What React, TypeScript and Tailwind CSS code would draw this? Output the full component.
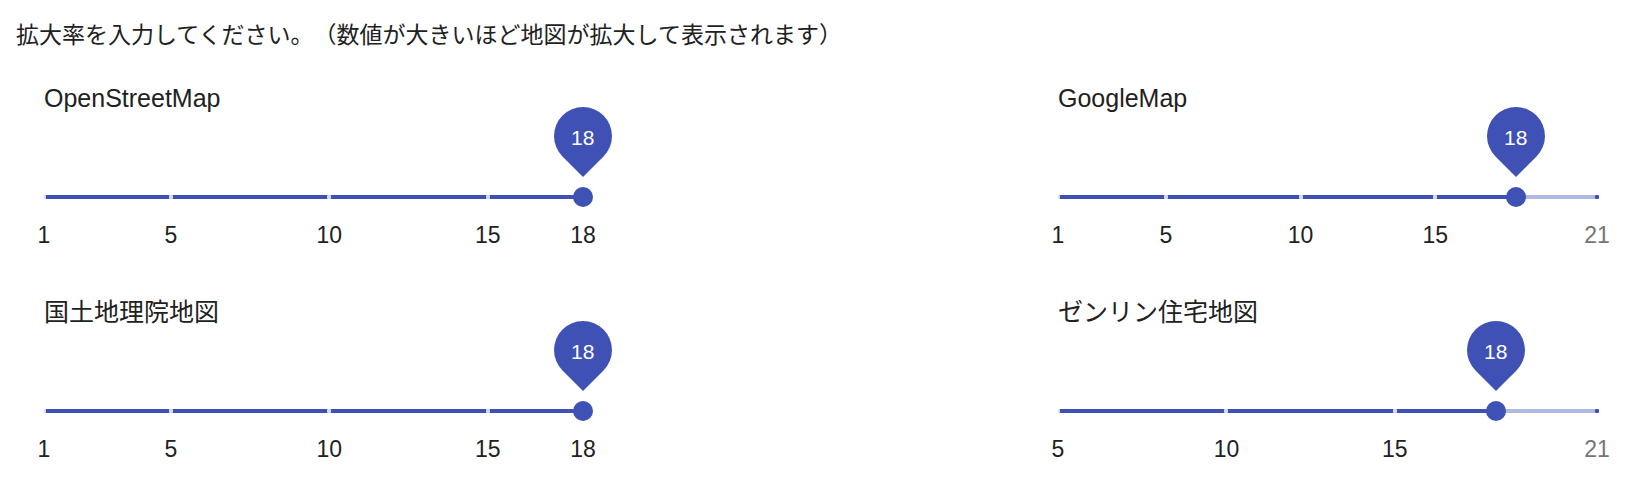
import React from 'react'

type TSlider = {
  label: string
  min: number
  max: number
  value: number
  marks: number[]
}

const sliders: TSlider[][] = [
  [
    { label: 'OpenStreetMap', min: 1, max: 18, value: 18, marks: [1, 5, 10, 15, 18] },
    { label: 'GoogleMap', min: 1, max: 21, value: 18, marks: [1, 5, 10, 15, 21] },
  ],
  [
    { label: '国土地理院地図', min: 1, max: 18, value: 18, marks: [1, 5, 10, 15, 18] },
    { label: 'ゼンリン住宅地図', min: 5, max: 21, value: 18, marks: [5, 10, 15, 21] },
  ],
]

const pct = (v: number, min: number, max: number) => ((v - min) / (max - min)) * 100

const ZoomSlider = ({ label, min, max, value, marks }: TSlider) => {
  const pos = pct(value, min, max)

  return (
    <div className="w-[539px]">
      <div className="text-[25px] leading-[30px] text-[#212121]">{label}</div>

      <div className="relative mt-[82px] h-[4px] w-full rounded-full bg-[#3f51b5]/40">
        <div className="h-full rounded-full bg-[#3f51b5]" style={{ width: `${pos}%` }} />

        {marks.map((m) => (
          <span
            key={m}
            className={`absolute top-0 h-[4px] w-[4px] -translate-x-1/2 rounded-[1px] ${
              m <= value ? 'bg-white/80' : 'bg-[#3f51b5]'
            }`}
            style={{ left: `${pct(m, min, max)}%` }}
          />
        ))}

        <div
          className="absolute top-1/2 h-[20px] w-[20px] -translate-x-1/2 -translate-y-1/2 rounded-full bg-[#3f51b5]"
          style={{ left: `${pos}%` }}
        />

        <div className="absolute top-[-88px] -translate-x-1/2" style={{ left: `${pos}%` }}>
          <div className="flex h-[58px] w-[58px] -rotate-45 items-center justify-center rounded-[50%_50%_50%_0] bg-[#3f51b5]">
            <span className="rotate-45 pt-[3px] text-[21px] leading-none text-white">{value}</span>
          </div>
        </div>
      </div>

      <div className="relative mt-[22px] h-[28px]">
        {marks.map((m) => (
          <span
            key={m}
            className={`absolute top-0 -translate-x-1/2 text-[23px] leading-[28px] ${
              m <= value ? 'text-[#212121]' : 'text-[#757575]'
            }`}
            style={{ left: `${pct(m, min, max)}%` }}
          >
            {m}
          </span>
        ))}
      </div>
    </div>
  )
}

export default function App() {
  return (
    <div
      className="h-[498px] w-[1646px] overflow-hidden bg-white"
      style={{ fontFamily: '"Liberation Sans", "Noto Sans CJK JP", sans-serif' }}
    >
      <div className="pl-4 pt-[20px] text-[23px] leading-[30px] text-[#212121] [text-spacing-trim:space-all]">
        拡大率を入力してください。（数値が大きいほど地図が拡大して表示されます）
      </div>

      <div className="mt-[33px] flex flex-col gap-[48px]">
        {sliders.map((row, i) => (
          <div key={i} className="flex justify-between pl-[44px] pr-[49px]">
            {row.map((s) => (
              <ZoomSlider key={s.label} {...s} />
            ))}
          </div>
        ))}
      </div>
    </div>
  )
}
